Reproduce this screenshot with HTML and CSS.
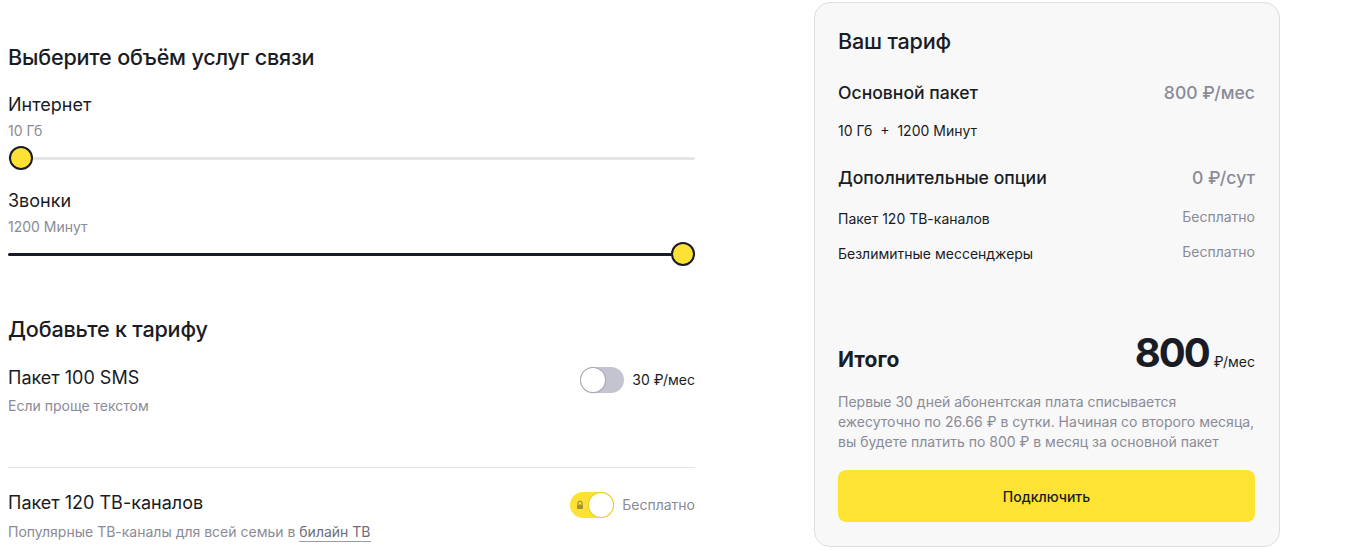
FILE: index.html
```html
<!DOCTYPE html>
<html lang="ru">
<head>
<meta charset="utf-8">
<title>Тариф</title>
<link rel="stylesheet" href="styles.css">
</head>
<body>
<div class="page">
  <div class="left">
    <h2 class="h-section">Выберите объём услуг связи</h2>
    <div class="param">
      <div class="param-title">Интернет</div>
      <div class="param-value">10 Гб</div>
      <div class="slider">
        <div class="track"></div>
        <div class="fill" style="width:0%"></div>
        <div class="knob knob-start"></div>
      </div>
    </div>
    <div class="param">
      <div class="param-title">Звонки</div>
      <div class="param-value">1200 Минут</div>
      <div class="slider">
        <div class="track"></div>
        <div class="fill" style="width:100%"></div>
        <div class="knob knob-end"></div>
      </div>
    </div>

    <h2 class="h-section h-add">Добавьте к тарифу</h2>
    <div class="option">
      <div class="option-text">
        <div class="option-title">Пакет 100 SMS</div>
        <div class="option-desc">Если проще текстом</div>
      </div>
      <div class="option-ctrl">
        <span class="toggle"><span class="toggle-knob"></span></span>
        <span class="option-price">30 ₽/мес</span>
      </div>
    </div>
    <div class="divider"></div>
    <div class="option option-tv">
      <div class="option-text">
        <div class="option-title">Пакет 120 ТВ-каналов</div>
        <div class="option-desc">Популярные ТВ-каналы для всей семьи в <span class="link">билайн ТВ</span></div>
      </div>
      <div class="option-ctrl">
        <span class="toggle toggle-on">
          <svg class="lock" viewBox="0 0 10 10" width="10" height="10"><path d="M3 4.5V3.2a2 2 0 0 1 4 0v1.3" fill="none" stroke="#a48f3a" stroke-width="1.2"/><rect x="2" y="4.5" width="6" height="4.5" rx="0.8" fill="#a48f3a"/></svg>
          <span class="toggle-knob"></span>
        </span>
        <span class="option-price muted">Бесплатно</span>
      </div>
    </div>
  </div>

  <aside class="card">
    <h2 class="card-title">Ваш тариф</h2>
    <div class="row row-main">
      <span class="row-label">Основной пакет</span>
      <span class="row-price">800 ₽/мес</span>
    </div>
    <div class="row-sub">10 Гб&nbsp; + &nbsp;1200 Минут</div>
    <div class="row row-extra">
      <span class="row-label">Дополнительные опции</span>
      <span class="row-price">0 ₽/сут</span>
    </div>
    <div class="row row-item row-item-first">
      <span>Пакет 120 ТВ-каналов</span>
      <span class="item-price">Бесплатно</span>
    </div>
    <div class="row row-item">
      <span>Безлимитные мессенджеры</span>
      <span class="item-price">Бесплатно</span>
    </div>

    <div class="total">
      <span class="total-label">Итого</span>
      <span class="total-sum"><span class="total-num">800</span><span class="total-unit">₽/мес</span></span>
    </div>
    <p class="note">Первые 30 дней абонентская плата списывается ежесуточно по 26.66 ₽ в сутки. Начиная со второго месяца, вы будете платить по 800 ₽ в месяц за основной пакет</p>
    <button class="btn">Подключить</button>
  </aside>
</div>
</body>
</html>
```
FILE: styles.css
```css
* { box-sizing: border-box; }
html, body { margin: 0; padding: 0; background: #fff; }
body {
  font-family: Inter, "Noto Sans", Roboto, sans-serif;
  color: #191c24;
}
.page {
  display: flex;
  align-items: flex-start;
  padding-left: 8px;
  padding-top: 2px;
  gap: 119px;
}
.left {
  width: 687px;
  padding-top: 41px;
}
.h-section {
  margin: 0;
  font-size: 21.6px;
  line-height: 28px;
  font-weight: 500;
  letter-spacing: -0.2px;
}
.param { margin-top: 22px; }
.param + .param { margin-top: 19px; }
.param-title {
  font-size: 18px;
  line-height: 24px;
  font-weight: 400;
}
.param-value {
  margin-top: 4px;
  font-size: 14px;
  line-height: 20px;
  color: #8a8b96;
}
.slider {
  position: relative;
  margin-top: 5px;
  height: 24px;
}
.slider .track {
  position: absolute;
  left: 0; right: 0; top: 11px;
  height: 3px;
  background: #e5e5e8;
  border-radius: 2px;
}
.slider .fill {
  position: absolute;
  left: 0; top: 11px;
  height: 3px;
  background: #191c24;
  border-radius: 2px;
}
.slider .knob {
  position: absolute;
  top: 0;
  width: 24px;
  height: 24px;
  border-radius: 50%;
  background: #fde235;
  border: 2px solid #191c24;
}
.slider .knob-start { left: 1px; }
.slider .knob-end { right: 0; }

.h-add { margin-top: 49px; }
.option {
  display: flex;
  justify-content: space-between;
  align-items: flex-start;
  margin-top: 23px;
}
.option-title {
  font-size: 18px;
  line-height: 24px;
}
.option-desc {
  margin-top: 6px;
  font-size: 14px;
  line-height: 20px;
  color: #8a8b96;
}
.option-tv .option-desc { margin-top: 7px; }
.link {
  color: #6c6e79;
  border-bottom: 1px solid #9a9ba5;
  padding-bottom: 1px;
}
.option-ctrl {
  display: flex;
  align-items: center;
  gap: 8px;
  margin-top: 1px;
}
.option-price {
  font-size: 14px;
  line-height: 20px;
  color: #191c24;
}
.option-price.muted { color: #8a8b96; }
.toggle {
  position: relative;
  display: inline-flex;
  align-items: center;
  width: 44px;
  height: 26px;
  border-radius: 13px;
  background: #c4c4d1;
  padding: 1px;
}
.toggle-knob {
  width: 24px;
  height: 24px;
  border-radius: 50%;
  background: #fff;
  box-shadow: 0 0 0 1px #a9a9b5, 0 1px 2px rgba(0,0,0,0.15);
}
.toggle-on {
  background: #fde235;
  justify-content: flex-end;
}
.toggle-on .toggle-knob {
  box-shadow: 0 0 0 1px #e8c92a;
}
.lock {
  position: absolute;
  left: 5px;
  top: 8px;
}
.divider {
  margin-top: 51px;
  height: 1px;
  background: #e3e3e6;
}
.option-tv { margin-top: 23px; }

/* card */
.card {
  width: 466px;
  height: 545px;
  background: #f8f8f9;
  border: 1px solid #dddde0;
  border-radius: 16px;
  padding: 24px 24px 24px 23px;
  display: flex;
  flex-direction: column;
}
.card-title {
  margin: 0;
  font-size: 21.6px;
  line-height: 28px;
  font-weight: 500;
  letter-spacing: -0.2px;
}
.row {
  display: flex;
  justify-content: space-between;
  align-items: flex-start;
}
.row-main { margin-top: 26px; }
.row-label {
  font-size: 17.6px;
  line-height: 24px;
  font-weight: 500;
}
.row-price {
  font-size: 17.6px;
  line-height: 24px;
  font-weight: 500;
  color: #8a8b96;
}
.row-sub {
  margin-top: 16px;
  font-size: 14px;
  line-height: 20px;
}
.row-extra { margin-top: 25px; }
.row-item {
  font-size: 14px;
  line-height: 20px;
}
.row-item-first { margin-top: 19px; }
.row-item + .row-item { margin-top: 15px; }
.item-price {
  color: #8a8b96;
  margin-top: -2px;
}
.total {
  margin-top: auto;
  display: flex;
  justify-content: space-between;
  align-items: baseline;
  line-height: 44px;
}
.total-label {
  font-size: 21px;
  font-weight: 700;
}
.total-num {
  font-size: 40px;
  font-weight: 700;
  letter-spacing: -2px;
}
.total-unit {
  font-size: 14px;
  margin-left: 5px;
}
.note {
  margin: 8px 0 0;
  font-size: 14px;
  line-height: 20px;
  color: #8a8b96;
}
.btn {
  margin-top: 18px;
  height: 52px;
  width: 100%;
  border: none;
  border-radius: 8px;
  background: #fde433;
  font-family: inherit;
  font-size: 14px;
  font-weight: 500;
  color: #191c24;
}
```
